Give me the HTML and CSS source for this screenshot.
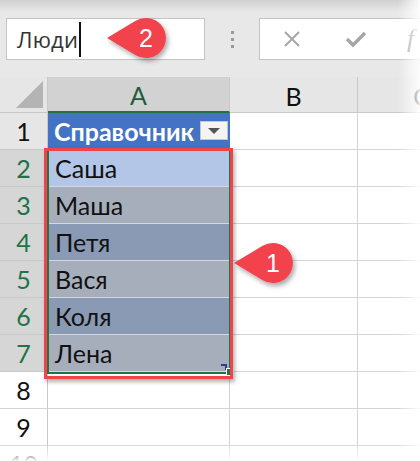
FILE: index.html
```html
<!DOCTYPE html>
<html>
<head>
<meta charset="utf-8">
<link rel="stylesheet" href="styles.css">
</head>
<body>
<div class="page">
  <div class="toolbar">
    <div class="namebox"><span class="nametext">Люди</span><span class="caret"></span></div>
    <div class="dots"><i></i><i></i><i></i></div>
    <div class="fbar">
      <svg class="ico-x" width="18" height="18" viewBox="0 0 18 18"><path d="M2 2 L16 16 M16 2 L2 16" stroke="#a6a6a6" stroke-width="2" fill="none"/></svg>
      <svg class="ico-v" width="22" height="18" viewBox="0 0 22 18"><path d="M2 9 L8 15 L20 3" stroke="#a6a6a6" stroke-width="3.4" fill="none"/></svg>
      <span class="fx">f</span>
    </div>
  </div>
  <div class="sheet">
    <div class="corner"><svg width="28" height="28" viewBox="0 0 28 28"><path d="M27 0 L27 27 L0 27 Z" fill="#b4b4b4"/></svg></div>
    <div class="ch sel">A</div>
    <div class="ch">B</div>
    <div class="ch">C</div>

    <div class="rh">1</div>
    <div class="c thead">Справочник<span class="dd"><svg width="12" height="6" viewBox="0 0 12 6"><path d="M0 0 L12 0 L6 6 Z" fill="#555"/></svg></span></div>
    <div class="c"></div><div class="c"></div>

    <div class="rh rsel">2</div>
    <div class="c t active">Саша</div>
    <div class="c"></div><div class="c"></div>

    <div class="rh rsel">3</div>
    <div class="c t odd">Маша</div>
    <div class="c"></div><div class="c"></div>

    <div class="rh rsel">4</div>
    <div class="c t even">Петя</div>
    <div class="c"></div><div class="c"></div>

    <div class="rh rsel">5</div>
    <div class="c t odd">Вася</div>
    <div class="c"></div><div class="c"></div>

    <div class="rh rsel">6</div>
    <div class="c t even">Коля</div>
    <div class="c"></div><div class="c"></div>

    <div class="rh rsel">7</div>
    <div class="c t odd">Лена</div>
    <div class="c"></div><div class="c"></div>

    <div class="rh plain">8</div>
    <div class="c"></div><div class="c"></div><div class="c"></div>

    <div class="rh plain">9</div>
    <div class="c"></div><div class="c"></div><div class="c"></div>

    <div class="rh plain">10</div>
    <div class="c"></div><div class="c"></div><div class="c"></div>
  </div>

  <div class="selection"></div>
  <div class="handle-dots"></div>
  <div class="fill-handle"></div>
  <div class="redbox"></div>

  <svg class="callouts" width="420" height="461" viewBox="0 0 420 461">
    <defs>
      <filter id="sh" x="-30%" y="-30%" width="160%" height="170%">
        <feDropShadow dx="2" dy="3" stdDeviation="2.5" flood-color="#000" flood-opacity="0.35"/>
      </filter>
    </defs>
    <path d="M107 38 L135.7 20.8 A20 20 0 1 1 135.7 55.2 Z" fill="#f2434b" filter="url(#sh)"/>
    <text x="146" y="47" class="num">2</text>
    <path d="M234 263 L262.7 245.8 A20 20 0 1 1 262.7 280.2 Z" fill="#f2434b" filter="url(#sh)"/>
    <text x="273" y="272" class="num">1</text>
  </svg>

  <div class="fade-top"></div>
  <div class="fade-right"></div>
  <div class="fade-bottom"></div>
</div>
</body>
</html>
```

FILE: styles.css
```css
html, body {
  margin: 0;
  padding: 0;
  background: #ffffff;
  overflow: hidden;
}
.page {
  position: relative;
  width: 420px;
  height: 461px;
  overflow: hidden;
  font-family: Lato, "Liberation Sans", sans-serif;
}
.toolbar {
  height: 77px;
  background: #e8e8e8;
  display: flex;
  align-items: flex-start;
  padding-top: 18px;
  box-sizing: border-box;
}
.namebox {
  margin-left: 6px;
  width: 199px;
  height: 42px;
  box-sizing: border-box;
  background: #fff;
  border: 1px solid #c4c4c4;
  display: flex;
  align-items: center;
  padding-left: 10px;
}
.nametext {
  font-family: "Open Sans", "Noto Sans", sans-serif;
  font-size: 22px;
  color: #333;
  letter-spacing: 0.2px;
}
.caret {
  width: 2px;
  height: 35px;
  background: #111;
  margin-left: 1px;
}
.dots {
  width: 54px;
  height: 42px;
  display: flex;
  flex-direction: column;
  align-items: center;
  justify-content: center;
  gap: 4px;
}
.dots i {
  display: block;
  width: 3px;
  height: 3px;
  background: #9a9a9a;
}
.fbar {
  flex: 1;
  height: 42px;
  box-sizing: border-box;
  background: #fff;
  border: 1px solid #c4c4c4;
  border-right: none;
  display: flex;
  align-items: center;
  padding-left: 23px;
}
.ico-x { margin-right: 44px; }
.ico-v { margin-right: 40px; }
.fx {
  font-family: "Liberation Serif", serif;
  font-style: italic;
  font-size: 26px;
  color: #9a9a9a;
}
.sheet {
  display: grid;
  grid-template-columns: 48px 182px 128px 128px;
  grid-template-rows: 36px repeat(10, 37px);
  font-size: 25px;
  color: #111;
}
.corner {
  background: #e6e6e6;
  border-right: 1px solid #c8c8c8;
  border-bottom: 1px solid #c8c8c8;
  display: flex;
  align-items: flex-end;
  justify-content: flex-end;
  padding: 0 3px 3px 0;
  box-sizing: border-box;
}
.ch {
  background: #e6e6e6;
  border-right: 1px solid #c8c8c8;
  border-bottom: 1px solid #c8c8c8;
  box-sizing: border-box;
  display: flex;
  align-items: center;
  justify-content: center;
  color: #111;
  padding-top: 2px;
}
.ch.sel {
  background: #d2d2d2;
  color: #1e5d3a;
  border-bottom: 2px solid #217346;
}
.rh {
  background: #e6e6e6;
  border-right: 1px solid #c8c8c8;
  border-bottom: 1px solid #c8c8c8;
  box-sizing: border-box;
  display: flex;
  align-items: center;
  justify-content: center;
}
.rh.rsel {
  background: #d6d6d6;
  color: #217346;
}
.rh.plain {
  background: #ffffff;
  border-bottom-color: #d4d4d4;
}
.c {
  border-right: 1px solid #d4d4d4;
  border-bottom: 1px solid #d4d4d4;
  box-sizing: border-box;
  display: flex;
  align-items: center;
  padding-left: 7px;
  background: #fff;
}
.thead {
  background: #4472c4;
  color: #fff;
  font-weight: bold;
  border-color: #4472c4;
  position: relative;
  padding-left: 6px;
}
.dd {
  position: absolute;
  right: 1px;
  top: 8px;
  width: 28px;
  height: 19px;
  box-sizing: border-box;
  background: #f4f4f4;
  border: 1px solid #c6c6c6;
  display: flex;
  align-items: center;
  justify-content: center;
}
.t {
  border-bottom-color: #d3d7df;
  border-right-color: #d4d4d4;
}
.active { background: #b4c6e7; }
.odd { background: #a7aebb; }
.even { background: #8a99b4; }
.selection {
  position: absolute;
  left: 47px;
  top: 149px;
  width: 184px;
  height: 225px;
  border: 2px solid #217346;
  box-sizing: border-box;
}
.fill-handle {
  position: absolute;
  left: 226px;
  top: 368px;
  width: 6px;
  height: 6px;
  background: #217346;
  border: 1px solid #fff;
}
.handle-dots {
  position: absolute;
  left: 221px;
  top: 364px;
  width: 4px;
  height: 4px;
  border-top: 2px solid #2a3f86;
  border-right: 2px solid #2a3f86;
}
.redbox {
  position: absolute;
  left: 44px;
  top: 148px;
  width: 189px;
  height: 231px;
  border: 3px solid #f2434b;
  box-sizing: border-box;
  box-shadow: 2px 3px 4px rgba(0,0,0,0.3);
}
.callouts {
  position: absolute;
  left: 0;
  top: 0;
}
.num {
  font-family: "Liberation Sans", Arial, sans-serif;
  font-size: 25px;
  fill: #fff;
  text-anchor: middle;
}
.fade-top {
  position: absolute;
  left: 0; top: 0;
  width: 420px; height: 12px;
  background: linear-gradient(to bottom, rgba(0,0,0,0.1), rgba(0,0,0,0));
}
.fade-right {
  position: absolute;
  right: 0; top: 0;
  width: 22px; height: 461px;
  background: linear-gradient(to right, rgba(255,255,255,0), rgba(255,255,255,0.9));
}
.fade-bottom {
  position: absolute;
  left: 0; bottom: 0;
  width: 420px; height: 18px;
  background: linear-gradient(to bottom, rgba(255,255,255,0), rgba(255,255,255,0.95));
}
```
